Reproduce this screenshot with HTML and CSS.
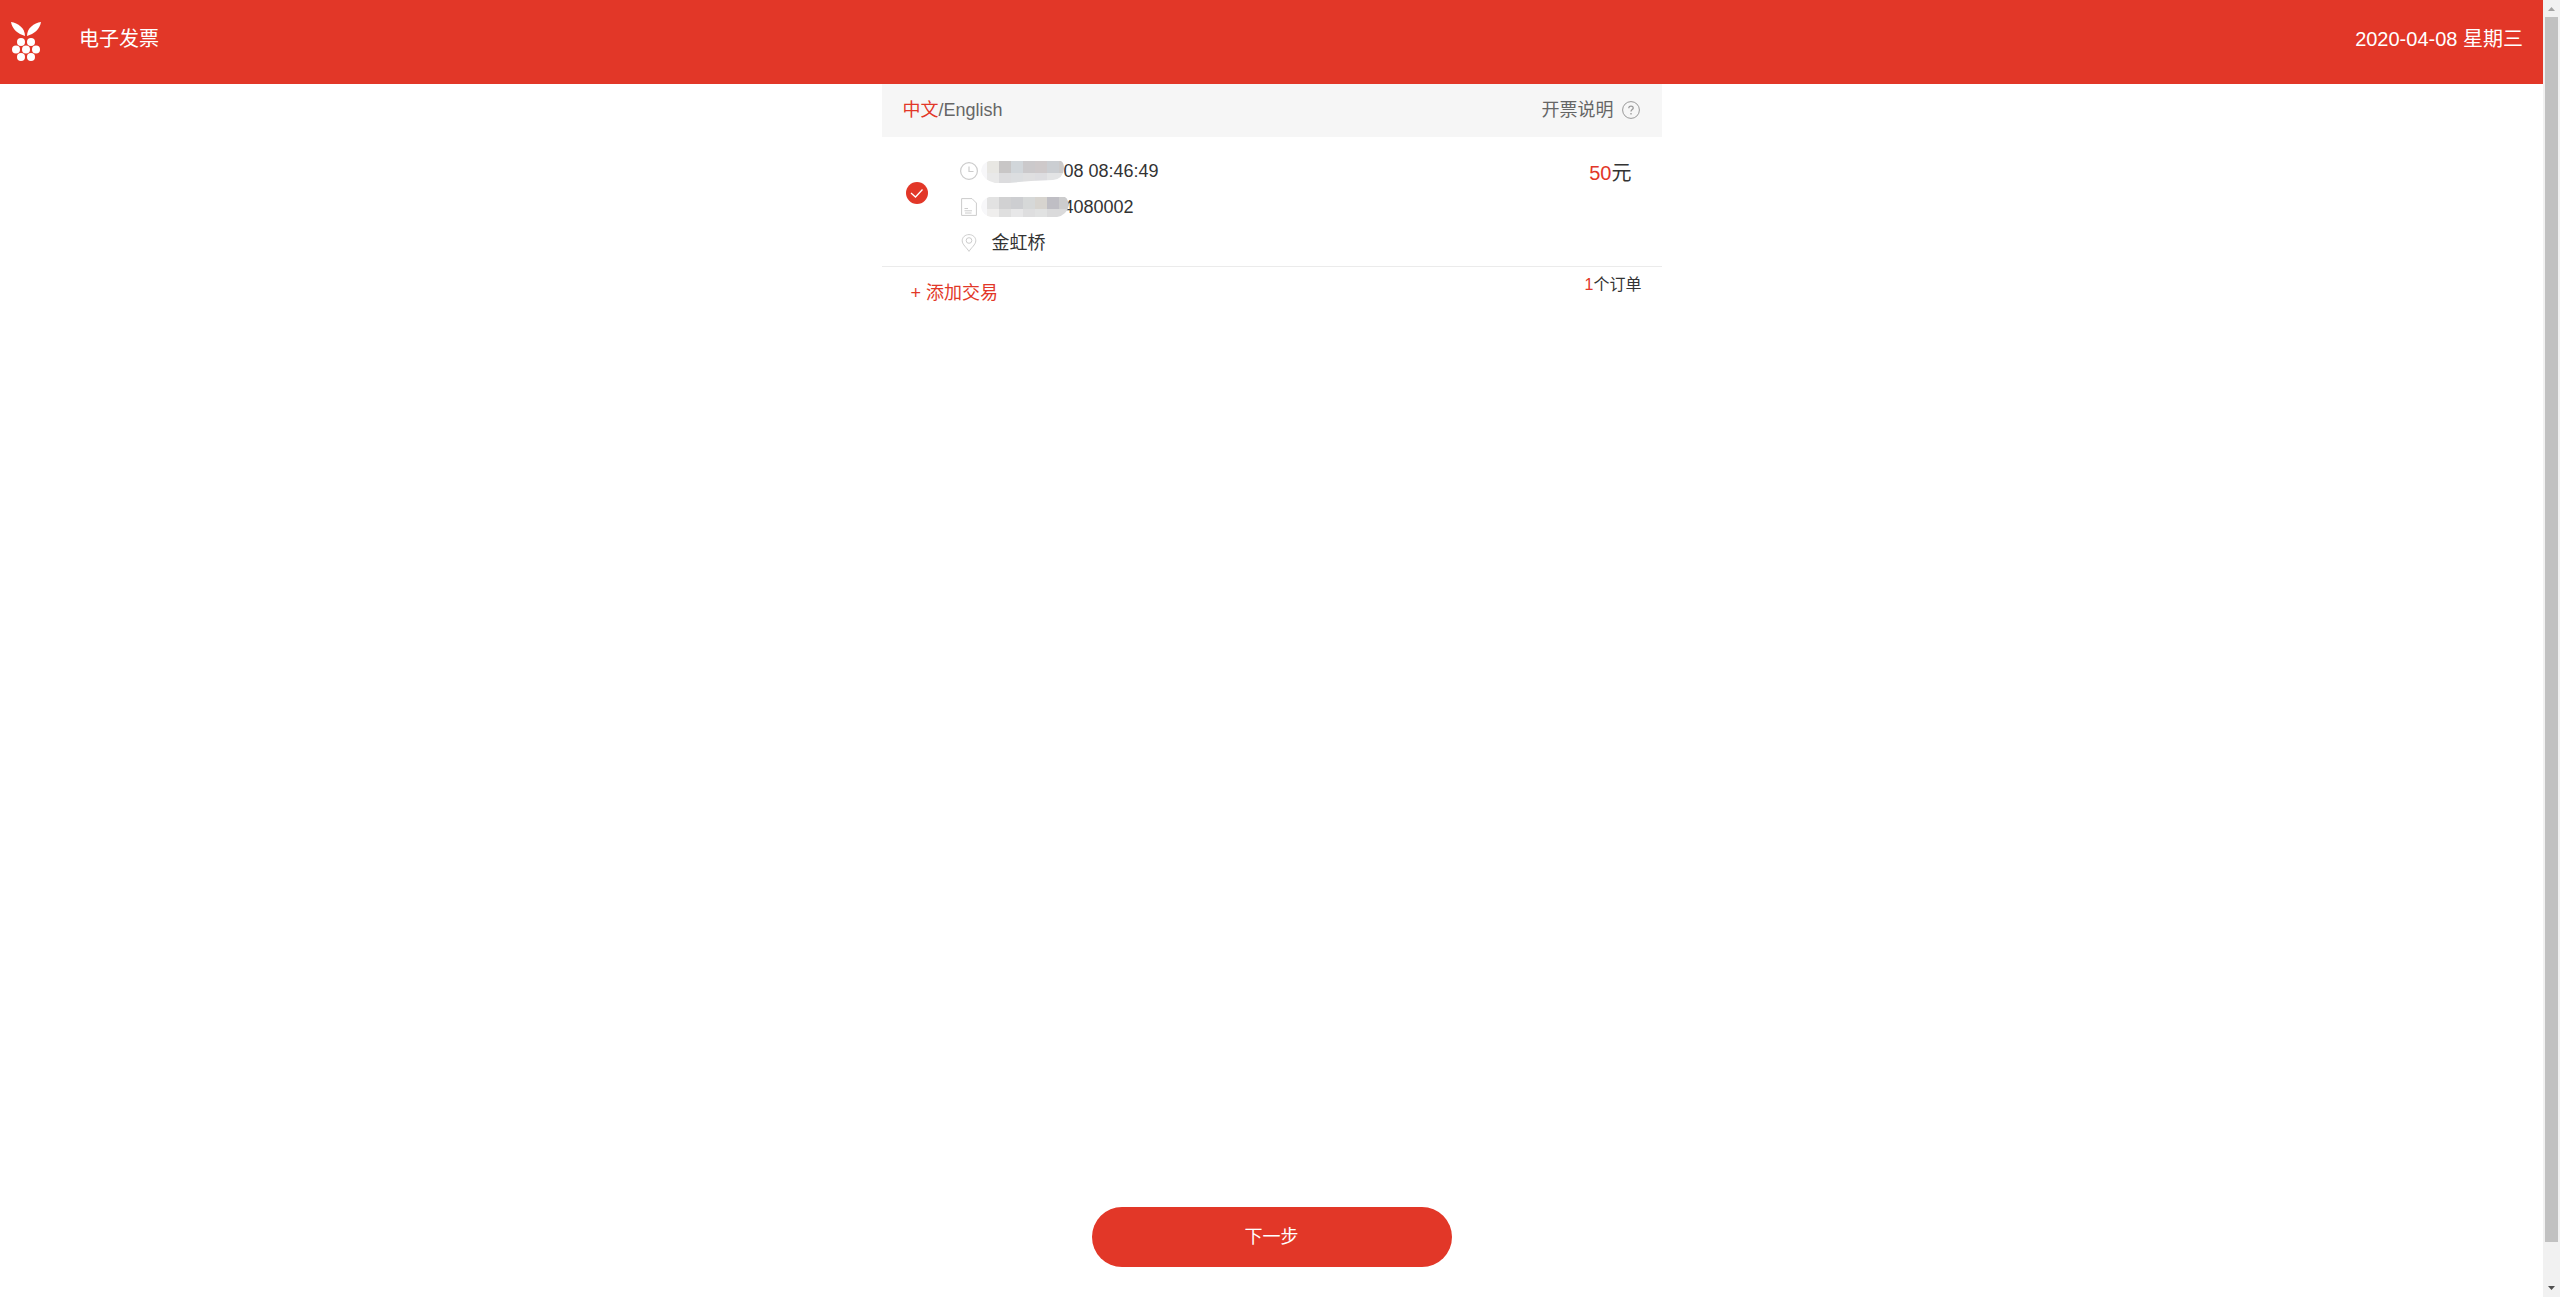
FILE: index.html
```html
<!DOCTYPE html>
<html lang="zh-CN">
<head>
<meta charset="utf-8">
<meta name="viewport" content="width=device-width, initial-scale=1">
<title>电子发票</title>
<link rel="stylesheet" href="styles.css">
</head>
<body>
<div class="page">
  <header class="header">
    <svg class="logo" viewBox="0 0 30 40" fill="#fff" aria-hidden="true">
      <path d="M0 0C7 1 14 6 14 14C7 12 1 7 0 0Z"/>
      <path d="M30 0C23 1 16 6 16 14C23 12 29 7 30 0Z"/>
      <circle cx="10" cy="20" r="4"/><circle cx="20" cy="20" r="4"/>
      <circle cx="5" cy="27.500" r="4"/><circle cx="15" cy="27.500" r="4"/><circle cx="25" cy="27.500" r="4"/>
      <circle cx="10" cy="35" r="4"/><circle cx="20" cy="35" r="4"/>
    </svg>
    <h1 class="title">电子发票</h1>
    <time class="date" datetime="2020-04-08">2020-04-08 星期三</time>
  </header>

  <main class="content">
    <nav class="toolbar">
      <div class="languages"><a class="lang lang-active" href="#zh">中文</a>/<a class="lang" href="#en">English</a></div>
      <a class="help" href="#help">开票说明
        <svg class="icon" viewBox="0 0 18 18" fill="none" stroke="#999" aria-hidden="true">
          <circle cx="9" cy="9" r="8.400"/>
          <path d="M6.800 7.200C6.800 4.300 11.300 4.500 11.200 7.100C11.100 8.600 9 8.700 9 10.600M9 12v1.400" stroke-width="1.300"/>
        </svg>
      </a>
    </nav>

    <section class="order">
      <input class="check" type="checkbox" id="order-1" aria-label="选择订单" checked>
      <label class="details" for="order-1">
        <span class="line">
          <svg class="icon" viewBox="0 0 18 18" fill="none" stroke="#ccc" aria-hidden="true">
            <circle cx="9" cy="9" r="8.400" stroke-width="1.200"/><path d="M9 4.500V9.500H13.500" stroke-width="1.200"/>
          </svg>
          <span class="value masked">08 08:46:49
            <svg class="mask" viewBox="0 0 88 24" aria-hidden="true">
              <clipPath id="mask-time"><path d="M8 0H80Q83 1 83 8Q82 18 72 19L50 20L28 22H14Q2 19 0 10Q1 2 8 0Z"/></clipPath>
              <g clip-path="url(#mask-time)" shape-rendering="crispEdges">
                <path fill="#f7f7f9" d="M0 0h6v24H0z"/>
                <path fill="#e8e7e3" d="M6 0h12v12H6z"/><path fill="#c8c6c6" d="M18 0h12v12H18z"/><path fill="#d1d6da" d="M30 0h12v12H30z"/><path fill="#cbc9cb" d="M42 0h12v12H42z"/><path fill="#cec9ca" d="M54 0h12v12H54z"/><path fill="#cbced2" d="M66 0h12v12H66z"/><path fill="#cccaca" d="M78 0h10v12H78z"/>
                <path fill="#e9e9e9" d="M6 12h12v12H6z"/><path fill="#dcdcde" d="M18 12h12v12H18z"/><path fill="#dcdee0" d="M30 12h12v12H30z"/><path fill="#dfdfe0" d="M42 12h12v12H42z"/><path fill="#dddde0" d="M54 12h12v12H54z"/><path fill="#e3e4e5" d="M66 12h22v12H66z"/>
              </g>
            </svg>
          </span>
        </span>
        <span class="line">
          <svg class="icon" viewBox="0 0 18 18" fill="none" stroke="#ccc" aria-hidden="true">
            <path d="M1.600 .6H12L16.400 5V17.400H1.600ZM4.500 10.500H8M4.500 12.800H12M5 15H11.500"/>
          </svg>
          <span class="value masked">4080002
            <svg class="mask" viewBox="0 0 88 24" aria-hidden="true">
              <clipPath id="mask-number"><path d="M8 0H84Q87 2 88 8Q86 18 76 20H10Q1 18 0 10Q1 2 8 0Z"/></clipPath>
              <g clip-path="url(#mask-number)" shape-rendering="crispEdges">
                <path fill="#f7f7f9" d="M0 0h6v24H0z"/>
                <path fill="#e2e2e2" d="M6 0h12v12H6z"/><path fill="#d1d1d2" d="M18 0h12v12H18z"/><path fill="#cdced1" d="M30 0h12v12H30z"/><path fill="#d6d8d8" d="M42 0h12v12H42z"/><path fill="#d7d4cf" d="M54 0h12v12H54z"/><path fill="#bfbec4" d="M66 0h12v12H66z"/><path fill="#cccccd" d="M78 0h10v12H78z"/>
                <path fill="#efeeed" d="M6 12h12v12H6z"/><path fill="#dfdfdf" d="M18 12h12v12H18z"/><path fill="#e7e7e8" d="M30 12h12v12H30z"/><path fill="#dededf" d="M42 12h12v12H42z"/><path fill="#e1e2e2" d="M54 12h12v12H54z"/><path fill="#dadadb" d="M66 12h22v12H66z"/>
              </g>
            </svg>
          </span>
        </span>
        <span class="line">
          <svg class="icon" viewBox="0 0 18 18" fill="none" stroke="#ccc" aria-hidden="true">
            <path d="M9 17.400C7 14 2.200 10.500 2.200 6.800C2.200 3.200 5.200 .6 9 .6S15.800 3.200 15.800 6.800C15.800 10.500 11 14 9 17.400Z"/><circle cx="9" cy="6.500" r="2.800"/>
          </svg>
          <span class="value">金虹桥</span>
        </span>
      </label>
      <div class="price"><span class="accent">50</span>元</div>
    </section>

    <div class="summary">
      <button class="add" type="button">+ 添加交易</button>
      <div class="count"><span class="accent">1</span>个订单</div>
    </div>
  </main>

  <button class="next" type="button">下一步</button>
</div>
<div class="scrollbar" aria-hidden="true">
  <svg class="arrow" viewBox="0 0 17 17" fill="#a3a3a3"><path d="M5 11L8.500 7L12 11Z"/></svg>
  <div class="track"><div class="thumb"></div></div>
  <svg class="arrow" viewBox="0 0 17 17" fill="#505050"><path d="M5 6L8.500 10L12 6Z"/></svg>
</div>
</body>
</html>
```
FILE: styles.css
```css
* {
  box-sizing: border-box;
}

body {
  display: flex;
  min-height: 100vh;
  margin: 0;
  background: #fff;
  color: #333;
  font: 400 18px/36px "Liberation Sans", "Noto Sans CJK SC", sans-serif;
}

a {
  color: inherit;
  text-decoration: none;
}

button {
  padding: 0;
  border: 0;
  background: none;
  font: inherit;
  cursor: pointer;
}

.page {
  display: flex;
  flex: 1;
  flex-direction: column;
  align-items: center;
}

.header {
  display: flex;
  align-items: flex-start;
  align-self: stretch;
  height: 84px;
  padding: 21px 20px 0 11px;
  background: #e23728;
  color: #fff;
  font-size: 20px;
}

.logo {
  width: 30px;
  height: 40px;
  margin-top: 1px;
}

.title {
  margin: 0 auto 0 38px;
  font-size: 20px;
  font-weight: 400;
}

.content {
  width: 100%;
  max-width: 780px;
}

.toolbar {
  display: flex;
  justify-content: space-between;
  padding: 8px 22px 9px 21px;
  background: #f6f6f6;
  color: #666;
}

.lang-active,
.accent {
  color: #e23728;
}

.help {
  display: flex;
  align-items: center;
  gap: 8px;
}

.icon {
  width: 18px;
  height: 18px;
  flex: none;
}

.order {
  display: flex;
  align-items: flex-start;
  padding: 16px 30px 5px 24px;
  border-bottom: 1px solid #ebebeb;
}

.check {
  width: 22px;
  height: 22px;
  margin: 29px 32px 0 0;
  appearance: none;
  border: 1px solid #ccc;
  border-radius: 50%;
}

.check:checked {
  border: 0;
  background: #e23728 url("data:image/svg+xml,%3Csvg xmlns='http://www.w3.org/2000/svg' viewBox='0 0 22 22' fill='none' stroke='white' stroke-width='1.300'%3E%3Cpath d='M5 11L9.500 15L16.500 7.500'/%3E%3C/svg%3E") center / 22px no-repeat;
}

.details {
  flex: 1;
}

.line {
  display: flex;
  align-items: center;
  gap: 14px;
}

.masked {
  position: relative;
  padding-left: 72px;
}

.mask {
  position: absolute;
  top: 8px;
  left: -11px;
  width: 88px;
  height: 24px;
}

.price {
  margin-top: 2px;
  font-size: 20px;
}

.summary {
  display: flex;
  align-items: flex-start;
  justify-content: space-between;
  padding: 0 20px 0 29px;
}

.add {
  margin-top: 8px;
  color: #e23728;
}

.count {
  font-size: 16px;
}

.next {
  width: 360px;
  max-width: 90%;
  height: 60px;
  margin: auto 0 30px;
  border-radius: 30px;
  background: #e23728;
  color: #fff;
}

.scrollbar {
  display: flex;
  flex-direction: column;
  width: 17px;
  background: #f1f1f1;
}

.arrow {
  width: 17px;
  height: 17px;
}

.track {
  flex: 1;
  padding: 0 2px;
}

.thumb {
  height: 97%;
  background: #c1c1c1;
}
```
